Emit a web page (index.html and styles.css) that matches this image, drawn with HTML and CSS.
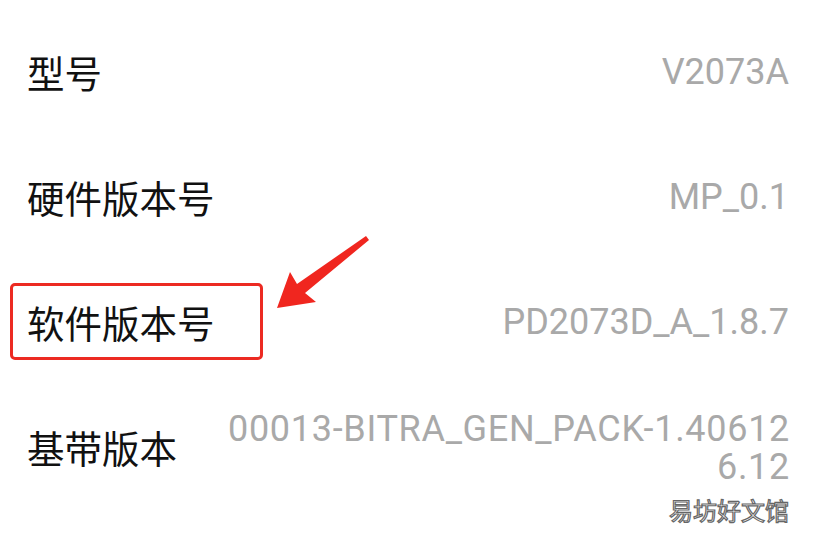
FILE: index.html
```html
<!DOCTYPE html>
<html>
<head>
<meta charset="utf-8">
<title>关于手机</title>
<link rel="stylesheet" href="styles.css">
</head>
<body>

<div class="page">

<!-- liste des infos -------------------------------------------------------->

<ul class="info">
	<li class="row"><span class="label">型号</span><span class="value">V2073A</span></li>
	<li class="row"><span class="label">硬件版本号</span><span class="value">MP_0.1</span></li>
	<li class="row"><span class="label marked">软件版本号</span><span class="value">PD2073D_A_1.8.7</span></li>
	<li class="row"><span class="label">基带版本</span><span class="value long">00013-BITRA_GEN_PACK-1.406126.12</span></li>
</ul>

<!-- annotation : fleche rouge ---------------------------------------------->

<svg class="arrow" width="100" height="80" viewBox="270 230 100 80">
	<polygon points="277,308 290,272 297,284 366,236 369,240 305,293 316,302" fill="#f0261f"/>
</svg>

<div class="watermark">易坊好文馆</div>

</div>

</body>
</html>
```

FILE: styles.css
```css
html, body {margin:0; padding:0; background:#fff;}
body {font-family:"Noto Sans CJK SC", sans-serif; width:816px; height:544px; overflow:hidden;}

.page {position:relative; width:816px; height:544px;}

ul.info {list-style:none; margin:0; padding:9px 27px 0 27px;}
li.row {height:125px; display:flex; align-items:center; justify-content:space-between;}

.label {font-size:37.5px; color:#111; white-space:nowrap; line-height:1;}
.label.marked {
	margin-left:-17px; padding:0 0 0 14px; width:233px; height:71px;
	display:flex; align-items:center;
	border:3px solid #ec2a22; border-radius:5px;
}

.value {font-family:Roboto, "Liberation Sans", sans-serif; font-size:36px; color:#a9a9a9; text-align:right; line-height:38px;}
.value.long {width:582px; word-break:break-all; margin-top:2px; line-height:38px; letter-spacing:0.7px; margin-right:-1px;}

.arrow {position:absolute; left:270px; top:230px;}

.watermark {
	position:absolute; left:669px; top:492px;
	font-size:24px; color:#fff;
	-webkit-text-stroke:1.2px #666;
}
```
